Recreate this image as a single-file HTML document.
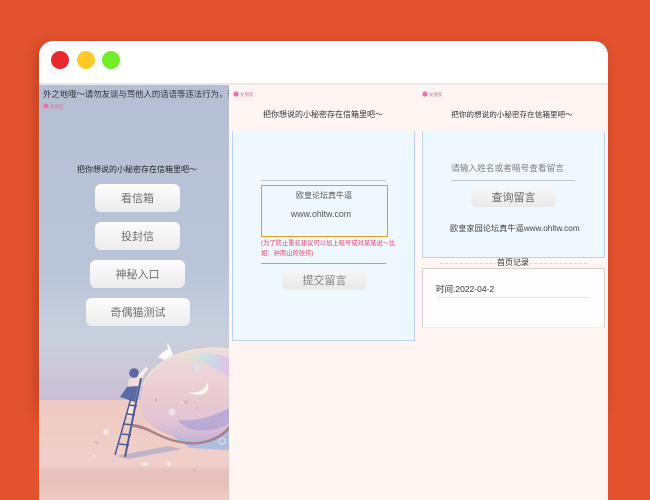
<!DOCTYPE html>
<html lang="zh"><head><meta charset="utf-8"><style>
*{box-sizing:border-box;margin:0;padding:0}
html,body{width:650px;height:500px;overflow:hidden;background:#e2522e;font-family:"Liberation Sans","WenQuanYi Zen Hei","Noto Sans CJK SC",sans-serif;color:#333}
#w{position:absolute;left:0;top:0;width:650px;height:500px;filter:blur(.35px)}
.abs{position:absolute}
.t{position:absolute;white-space:nowrap;line-height:1}
.c{transform:translateX(-50%)}
.btn{position:absolute;border-radius:6px;background:linear-gradient(#fdfdfd,#ececec);color:#6e6e6e;font-size:11px;display:flex;align-items:center;justify-content:center}
.logo{position:absolute;width:21px;height:8px}
</style></head><body><div id="w">
<div class="abs" style="left:39px;top:41px;width:569px;height:374px;border-radius:14px;box-shadow:-3px 3px 12px rgba(110,35,15,.32)"></div>
<div class="abs" style="left:39px;top:41px;width:569px;height:44px;background:#fff;border-radius:14px 14px 0 0;border-bottom:2px solid #e9e9e9"></div>
<div class="abs" style="left:51px;top:51px;width:18px;height:18px;border-radius:50%;background:#e8282c"></div>
<div class="abs" style="left:77px;top:51px;width:18px;height:18px;border-radius:50%;background:#ffca28"></div>
<div class="abs" style="left:102px;top:51px;width:18px;height:18px;border-radius:50%;background:#70ee2a"></div>

<!-- left panel -->
<div class="abs" style="left:39px;top:85px;width:190px;height:415px;overflow:hidden;background:linear-gradient(#b5bed2,#bbc5d9 45%,#c8d0dd 60%)">
<svg class="abs" style="left:0;top:245px" width="190" height="170" viewBox="39 330 190 170">
<defs>
<linearGradient id="sky" x1="0" y1="0" x2="0" y2="1"><stop offset="0" stop-color="#c8d0dd"/><stop offset=".5" stop-color="#cbc9da"/><stop offset="1" stop-color="#c9bed3"/></linearGradient>
<linearGradient id="floor" x1="0" y1="0" x2="0" y2="1"><stop offset="0" stop-color="#eecbc4"/><stop offset=".65" stop-color="#f0cfca"/><stop offset=".7" stop-color="#e8c2be"/><stop offset=".85" stop-color="#e9c2be"/><stop offset="1" stop-color="#efcbc6"/></linearGradient>
<linearGradient id="bub" x1="0" y1="0" x2="0" y2="1"><stop offset="0" stop-color="#ecdcde"/><stop offset=".5" stop-color="#eaccd2"/><stop offset=".8" stop-color="#e2c4d4"/><stop offset="1" stop-color="#c6b4d6"/></linearGradient>
<linearGradient id="rain" x1="0" y1="0" x2="1" y2="0"><stop offset="0" stop-color="#f3e7c2" stop-opacity=".3"/><stop offset=".45" stop-color="#cfe6da"/><stop offset=".75" stop-color="#c8d4ec"/><stop offset="1" stop-color="#e2c0e6"/></linearGradient>
</defs>
<rect x="39" y="330" width="190" height="71" fill="url(#sky)"/>
<rect x="39" y="400" width="190" height="100" fill="url(#floor)"/>
<path d="M172 436 L229 424 L229 450 L190 448Z" fill="#aebce0"/>
<path d="M116 456 L168 446 L182 449 L128 459Z" fill="#8f9ac8" opacity=".5"/>
<path d="M229 349 C200 346 172 352 155 368 C141 382 138 400 142 414 C146 425 165 436 190 440 C205 442 220 436 229 428Z" fill="url(#bub)"/>
<path d="M229 357 C208 352 190 352 175 358 C195 358 215 366 229 378Z" fill="url(#rain)" opacity=".85"/>
<path d="M229 349 C200 346 172 352 155 368 C148 374 145 380 143 386" fill="none" stroke="#f1e5d6" stroke-width="1.4"/>
<path d="M229 408 C215 416 195 422 178 420 C185 432 210 434 229 424Z" fill="#a9a0d4" opacity=".7"/>
<path d="M133 424 C150 425 160 440 190 442 C205 443 220 437 229 426 L229 430 C218 442 200 446 186 444 C160 441 153 430 133 427Z" fill="#ab8088"/>
<path d="M188 392 C198 394 206 390 207 382 C212 392 202 399 188 392Z" fill="#fff8ea"/>
<circle cx="197" cy="368" r="3" fill="#dde2e8"/><circle cx="172" cy="412" r="3.5" fill="#ece4ea"/><circle cx="222" cy="441" r="3" fill="none" stroke="#dfe6ee"/>
<path d="M158 357 L163 352 L168 349 L167 343 L170 347 L173 355 L164 360 Z" fill="#fafafa"/>
<circle cx="134" cy="373" r="4.8" fill="#5d68a2"/>
<path d="M138 375 L146 367 L148 369 L140 380Z" fill="#f6efe9"/>
<path d="M129 379 L139 377 L141 386 L128 386Z" fill="#f4dcdc"/>
<path d="M127 387 L138 386 L135 402 L120 397Z" fill="#5a6ba6"/>
<path d="M129 402 L134 402 L131 417 L126 416Z" fill="#f6e9e7"/>
<g stroke="#4a5a94" fill="none">
<path d="M141 378 L125 457" stroke-width="1.9"/>
<path d="M131 398 L115 455" stroke-width="1.5"/>
<path d="M129 405 L137 406M127 414 L135 415M124 424 L133 425M122 434 L131 435M119 444 L129 445" stroke-width="1.5"/>
</g>
<g fill="#eda79a"><circle cx="156" cy="400" r="1.4"/><circle cx="186" cy="402" r="1.5"/><circle cx="95" cy="442" r=".8"/><circle cx="197" cy="408" r="1"/></g>
<g fill="#fff3dc" opacity=".85"><circle cx="106" cy="432" r="2.6"/><circle cx="169" cy="464" r="2.2"/><circle cx="94" cy="456" r="1"/><circle cx="181" cy="403" r="1"/></g>
<g fill="#a8b2dc"><circle cx="97" cy="443" r="1"/><circle cx="195" cy="470" r="1"/></g>
<ellipse cx="145" cy="464" rx="4" ry="1.5" fill="#f5efe9"/>
</svg>
</div>
<div class="t" style="left:43px;top:90px;width:186px;overflow:hidden;font-size:8.4px;color:#333">外之地哦～请勿友谈与骂他人的话语等违法行为，否则后果自负</div>
<svg class="logo" style="left:43px;top:102px" viewBox="0 0 21 8"><circle cx="3" cy="4" r="2.6" fill="#ee70a8"/><text x="7" y="6" font-size="4.5" fill="#d07898">女朋友</text></svg>
<div class="t c" style="left:137px;top:166px;font-size:8px;color:#222">把你想说的小秘密存在信箱里吧～</div>
<div class="btn" style="left:95px;top:184px;width:85px;height:28px">看信箱</div>
<div class="btn" style="left:95px;top:222px;width:85px;height:28px">投封信</div>
<div class="btn" style="left:90px;top:260px;width:95px;height:28px">神秘入口</div>
<div class="btn" style="left:86px;top:298px;width:104px;height:28px">奇偶猫测试</div>

<!-- right bg -->
<div class="abs" style="left:229px;top:85px;width:379px;height:415px;background:#fff5f3"></div>

<!-- middle -->
<svg class="logo" style="left:233px;top:90px" viewBox="0 0 21 8"><circle cx="3" cy="4" r="2.6" fill="#ee70a8"/><text x="7" y="6" font-size="4.5" fill="#d07898">女朋友</text></svg>
<div class="t c" style="left:323px;top:111px;font-size:8px;color:#333">把你想说的小秘密存在信箱里吧～</div>
<div class="abs" style="left:232px;top:131px;width:183px;height:210px;background:#f0f8ff;border:1px solid #b8d2f0;border-top:0"></div>
<div class="abs" style="left:261px;top:180px;width:125px;height:1px;background:#c4c4c4"></div>
<div class="abs" style="left:261px;top:185px;width:127px;height:52px;border:1px solid #e0a020"></div>
<div class="t c" style="left:324px;top:192px;font-size:8px;color:#555">欧皇论坛真牛逼</div>
<div class="t c" style="left:321px;top:210px;font-size:8.8px;color:#555">www.ohltw.com</div>
<div class="t" style="left:261px;top:241px;font-size:6.3px;color:#f0406a">(为了防止重名建议可以加上暗号或对某某说～比</div>
<div class="t" style="left:261px;top:251px;font-size:6.3px;color:#f0406a">如：钟南山的张伟)</div>
<div class="abs" style="left:261px;top:263px;width:125px;height:1px;background:#a8a8a8"></div>
<div class="btn" style="left:282px;top:269px;width:85px;height:21px;border-radius:5px;background:linear-gradient(#f7f7f7,#e9e9e9);color:#808080">提交留言</div>

<!-- right -->
<svg class="logo" style="left:422px;top:90px" viewBox="0 0 21 8"><circle cx="3" cy="4" r="2.6" fill="#ee70a8"/><text x="7" y="6" font-size="4.5" fill="#d07898">女朋友</text></svg>
<div class="t c" style="left:512px;top:111px;font-size:7.6px;color:#333">把你的想说的小秘密存在信箱里吧～</div>
<div class="abs" style="left:422px;top:131px;width:183px;height:127px;background:#f0f8ff;border:1px solid #b8d2f0;border-top:0"></div>
<div class="t" style="left:451px;top:164px;font-size:8.7px;color:#808080">请输入姓名或者暗号查看留言</div>
<div class="abs" style="left:451px;top:180px;width:124px;height:1px;background:#c4c4c4"></div>
<div class="btn" style="left:471px;top:186px;width:85px;height:21px;border-radius:5px;background:linear-gradient(#f9f9f9,#e9e9e9);color:#666">查询留言</div>
<div class="t" style="left:450px;top:225px;font-size:8.2px;color:#444">欧皇家园论坛真牛逼www.ohltw.com</div>
<div class="abs" style="left:440px;top:263px;width:147px;border-top:1px dashed #e6cfca"></div>
<div class="t c" style="left:513px;top:259px;font-size:8px;background:#fff5f3;padding:0 1px;color:#333">首页记录</div>
<div class="abs" style="left:422px;top:268px;width:183px;height:60px;background:#fdfdfd;border:1px solid #d4d0d0;border-bottom:1px solid #f2eeee"></div>
<div class="t" style="left:436px;top:285px;font-size:8.5px;color:#333">时间:2022-04-2</div>
<div class="abs" style="left:437px;top:297px;width:152px;height:1px;background:#e6e6e6"></div>
</div></body></html>
